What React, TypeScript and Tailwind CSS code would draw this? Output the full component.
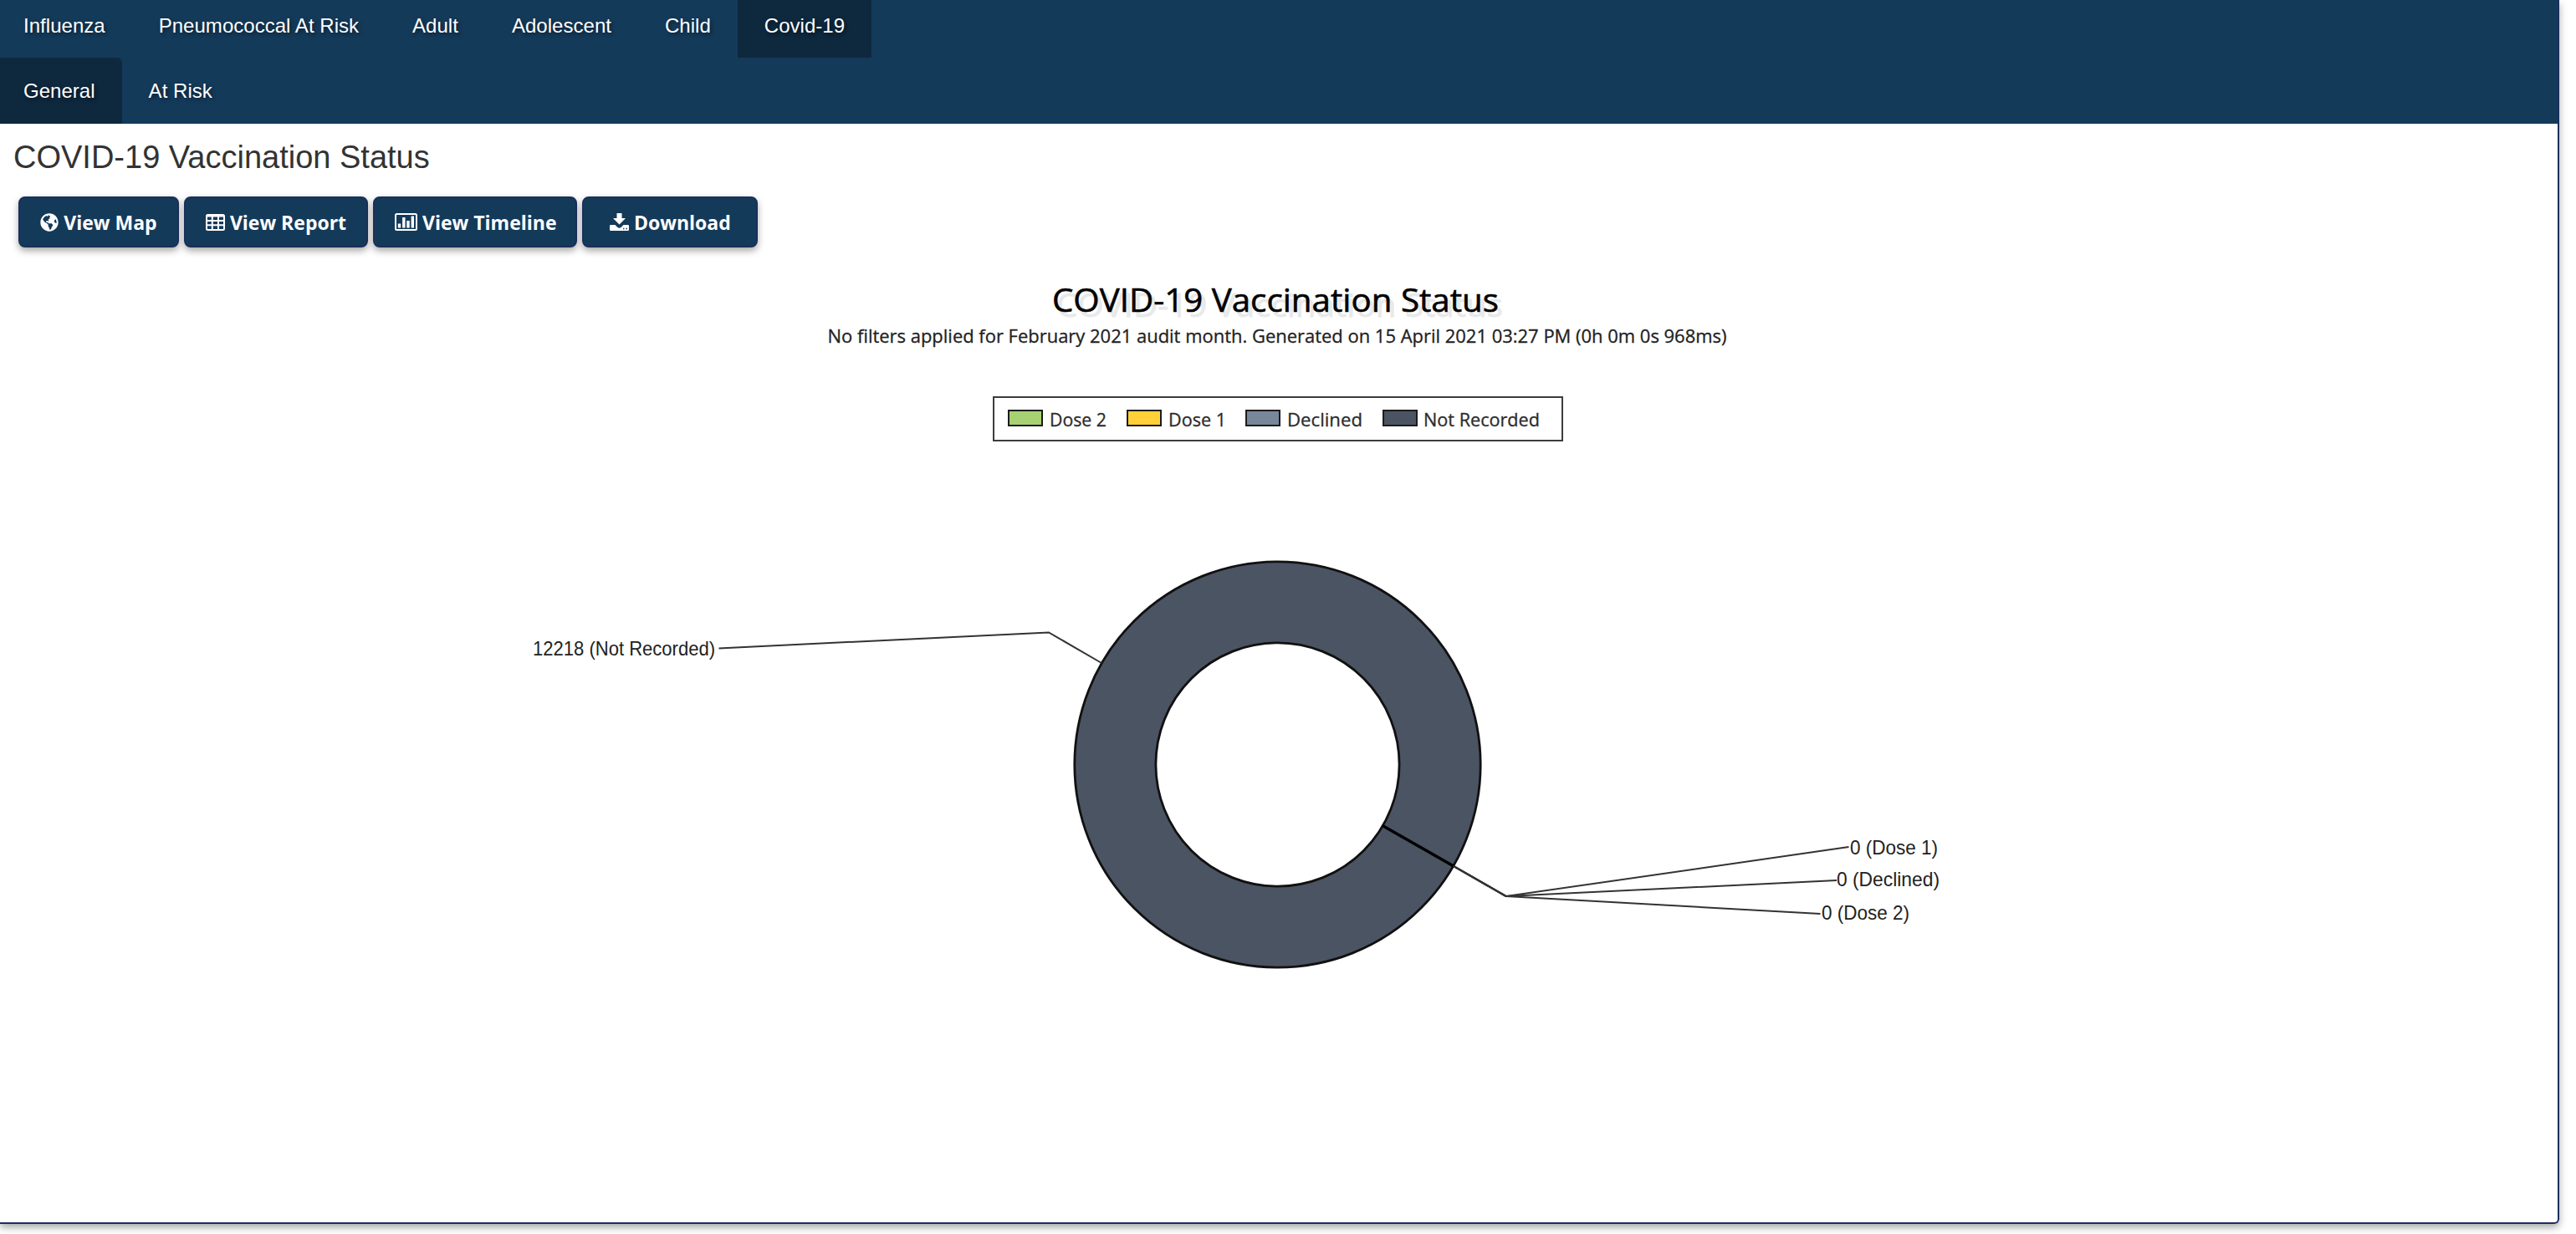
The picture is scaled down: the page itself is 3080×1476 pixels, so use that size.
import type { ReactNode } from "react";
import { FaGlobeAmericas } from "react-icons/fa";

const tabs = ["Influenza", "Pneumococcal At Risk", "Adult", "Adolescent", "Child", "Covid-19"];
const subTabs = ["General", "At Risk"];

const TableIcon = () => (
  <svg className="w-[23px] h-[20px]" viewBox="0 0 23 20">
    <rect x="1" y="1" width="21" height="18" rx="1.5" fill="none" stroke="#fff" strokeWidth="2" />
    <path d="M1 2.500h21M1 8h21M1 13.300h21M7.800 2v17M15 2v17" stroke="#fff" strokeWidth="2" />
  </svg>
);

const ChartIcon = () => (
  <svg className="w-[27px] h-[21px]" viewBox="0 0 27 21">
    <rect x="1" y="1" width="25" height="19" rx="1.5" fill="none" stroke="#fff" strokeWidth="2" />
    <path d="M5.500 12.500v5M10.800 5v12.500M16 9v8.500M21.300 3.500v14" stroke="#fff" strokeWidth="3.400" />
  </svg>
);

const DownloadIcon = () => (
  <svg className="w-[23px] h-[21px]" viewBox="0 0 23 21">
    <path d="M8.500 0h6v6h4.500l-7.500 7.500l-7.500-7.500h4.500z" fill="#fff" />
    <path
      d="M1.200 14h5.300l3 3q2 1.500 4 0l3-3h5.300q1.200 0 1.200 1.200v4.600q0 1.200-1.200 1.200h-20.600q-1.200 0-1.200-1.200v-4.600q0-1.200 1.200-1.200z"
      fill="#fff"
    />
    <path d="M16 18.500h1.500M19.500 18.500h1.500" stroke="#143a5a" strokeWidth="1.500" />
  </svg>
);

const actions: { label: string; icon: ReactNode; width: string; textWidth: string }[] = [
  {
    label: "View Map",
    icon: <FaGlobeAmericas className="h-[22px] w-[22px]" />,
    width: "w-[192px]",
    textWidth: "w-[113px]",
  },
  { label: "View Report", icon: <TableIcon />, width: "w-[220px]", textWidth: "w-[140px]" },
  { label: "View Timeline", icon: <ChartIcon />, width: "w-[244px]", textWidth: "w-[159px]" },
  { label: "Download", icon: <DownloadIcon />, width: "w-[210px]", textWidth: "w-[115px]" },
];

const legend = [
  { label: "Dose 2", color: "#a8d173", x: 1205, textX: 1255, length: 68 },
  { label: "Dose 1", color: "#ffd038", x: 1347, textX: 1397, length: 69 },
  { label: "Declined", color: "#78879a", x: 1489, textX: 1539, length: 90 },
  { label: "Not Recorded", color: "#4b5463", x: 1653, textX: 1702, length: 139 },
];

const labels = [
  { text: "12218 (Not Recorded)", x: 637, y: 783.5, length: 218, line: "859.500,775.500 1254,756.500 1317,793" },
  { text: "0 (Dose 1)", x: 2212, y: 1021.5, length: 105, line: "1738,1036 1800.700,1072 2210.500,1013" },
  { text: "0 (Declined)", x: 2196, y: 1059.5, length: 123, line: "1738,1036 1800.700,1072 2196,1053" },
  { text: "0 (Dose 2)", x: 2178, y: 1099.5, length: 105, line: "1738,1036 1800.700,1072 2176.500,1093" },
];

const Tab = ({ label, active, className = "" }: { label: string; active: boolean; className?: string }) => (
  <a
    className={`flex items-center h-full pr-8 text-2xl tracking-[0.03px] whitespace-nowrap text-white [text-shadow:2px_2px_4px_rgba(0,0,0,0.5)] ${
      active ? "bg-[#0e283e]" : ""
    } ${className}`}
  >
    {label}
  </a>
);

const DonutChart = () => (
  <svg className="block w-[3058px] h-[1150px]" viewBox="0 312 3058 1150">
    <g fontFamily="'Trebuchet MS', 'Open Sans', sans-serif">
      <text
        x="1263"
        y="378.500"
        fontSize="39"
        fill="#e9e9e9"
        stroke="#e9e9e9"
        strokeWidth="0.800"
        textLength="534"
        lengthAdjust="spacingAndGlyphs"
      >
        COVID-19 Vaccination Status
      </text>
      <text
        x="1258"
        y="373"
        fontSize="39"
        fill="#000"
        stroke="#000"
        strokeWidth="0.600"
        textLength="534"
        lengthAdjust="spacingAndGlyphs"
      >
        COVID-19 Vaccination Status
      </text>
      <text
        x="989.500"
        y="409.500"
        fontSize="21.500"
        fill="#222"
        stroke="#222"
        strokeWidth="0.300"
        textLength="1075"
        lengthAdjust="spacingAndGlyphs"
      >
        No filters applied for February 2021 audit month. Generated on 15 April 2021 03:27 PM (0h 0m 0s 968ms)
      </text>

      {/* Legend */}
      <rect x="1188" y="475" width="680" height="52" fill="#fff" stroke="#3c3c3c" strokeWidth="2" />
      {legend.map((item) => (
        <g key={item.label}>
          <rect x={item.x + 1} y="491" width="40" height="18" fill={item.color} stroke="#1c1c1c" strokeWidth="2" />
          <text
            x={item.textX}
            y="509.500"
            fontSize="21.500"
            fill="#2c2c2c"
            stroke="#2c2c2c"
            strokeWidth="0.300"
            textLength={item.length}
            lengthAdjust="spacingAndGlyphs"
          >
            {item.label}
          </text>
        </g>
      ))}
    </g>

    {/* Ring and leader lines */}
    <circle cx="1527.500" cy="914.500" r="194" fill="none" stroke="#4b5463" strokeWidth="97" />
    <circle cx="1527.500" cy="914.500" r="242.700" fill="none" stroke="#111" strokeWidth="2.800" />
    <circle cx="1527.500" cy="914.500" r="145.600" fill="none" stroke="#111" strokeWidth="2.800" />
    <path d="M1653 987.500L1738 1036" stroke="#000" strokeWidth="3.500" />
    <path d="M1738 1036L1800.700 1072" stroke="#111" strokeWidth="2.200" />
    <g fontFamily="'Liberation Sans', Arial, sans-serif" fontSize="24" fill="#222">
      {labels.map((label) => (
        <g key={label.text}>
          <polyline points={label.line} fill="none" stroke="#333" strokeWidth="2" />
          <text x={label.x} y={label.y} textLength={label.length} lengthAdjust="spacingAndGlyphs">
            {label.text}
          </text>
        </g>
      ))}
    </g>
  </svg>
);

const App = () => {
  return (
    <div className="h-[1476px] w-[3080px] overflow-hidden bg-white font-['Liberation_Sans',Arial,sans-serif]">
      <div className="h-[1464px] w-[3060px] rounded-br-[6px] border-r-2 border-b-2 border-[#1b2f5b] shadow-[0_4px_10px_rgba(0,0,0,0.35)]">
        <nav className="h-[148px] bg-[#143a5a]">
          <div className="flex h-[69px]">
            {tabs.map((tab, index) => (
              <Tab
                key={tab}
                label={tab}
                active={tab === "Covid-19"}
                className={index === 0 ? "pl-7 pb-2" : "pl-8 pb-2"}
              />
            ))}
          </div>
          <div className="flex h-[79px]">
            {subTabs.map((tab, index) => (
              <Tab
                key={tab}
                label={tab}
                active={index === 0}
                className={index === 0 ? "pl-7 rounded-tr-[6px]" : "pl-8"}
              />
            ))}
          </div>
        </nav>

        <h3 className="pt-5 pl-4 text-[38px] leading-10 text-[#333]">COVID-19 Vaccination Status</h3>

        <div className="flex gap-1.5 pt-[27px] pl-[22px]">
          {actions.map((action) => (
            <button
              key={action.label}
              className={`flex h-[61px] shrink-0 items-center justify-center gap-1.5 rounded-lg border-2 border-[#1b2f5b] bg-[#143a5a] font-['Segoe_UI','Open_Sans',sans-serif] text-[23px] font-bold whitespace-nowrap text-white shadow-[0_4px_8px_rgba(0,0,0,0.35)] ${action.width}`}
            >
              {action.icon}
              <span className={`pt-0.5 ${action.textWidth}`}>{action.label}</span>
            </button>
          ))}
        </div>

        <div className="pt-4">
          <DonutChart />
        </div>
      </div>
    </div>
  );
};

export default App;
